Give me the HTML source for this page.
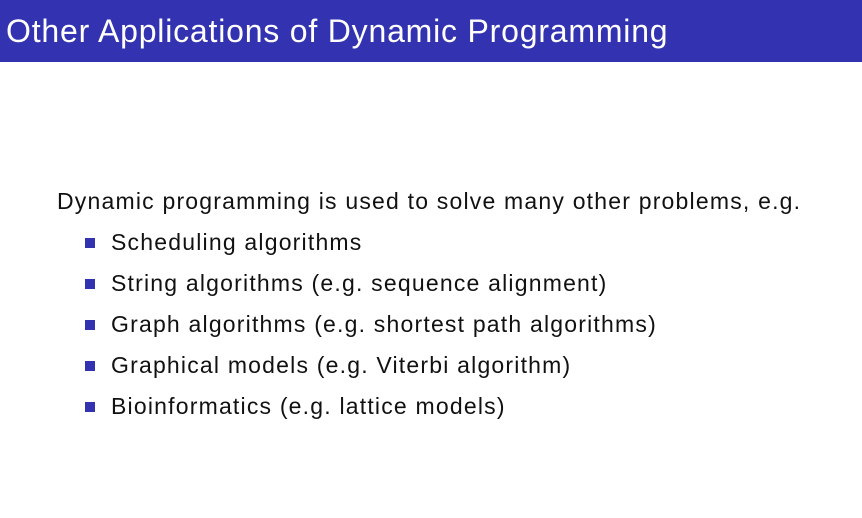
<!DOCTYPE html>
<html><head><style>
body{margin:0;width:862px;height:518px;background:#fff;position:relative;overflow:hidden;font-family:"Liberation Sans",sans-serif;}
.bar{position:absolute;left:0;top:0;width:862px;height:62px;background:#3333b2;}
.title{position:absolute;left:6px;top:13px;color:#fff;font-size:32px;letter-spacing:0.8px;white-space:nowrap;}
.t{position:absolute;font-size:23px;letter-spacing:1.2px;color:#111;white-space:nowrap;}
.b{position:absolute;left:85px;width:10px;height:10px;background:#3333b2;}
</style></head><body>
<div class="bar"></div>
<div class="title">Other Applications of Dynamic Programming</div>
<div class="t" style="left:57px;top:188px">Dynamic programming is used to solve many other problems, e.g.</div>
<div class="b" style="top:238px"></div><div class="t" style="left:111px;top:229px">Scheduling algorithms</div>
<div class="b" style="top:279px"></div><div class="t" style="left:111px;top:270px">String algorithms (e.g. sequence alignment)</div>
<div class="b" style="top:320px"></div><div class="t" style="left:111px;top:311px">Graph algorithms (e.g. shortest path algorithms)</div>
<div class="b" style="top:361px"></div><div class="t" style="left:111px;top:352px">Graphical models (e.g. Viterbi algorithm)</div>
<div class="b" style="top:402px"></div><div class="t" style="left:111px;top:393px">Bioinformatics (e.g. lattice models)</div>
</body></html>
